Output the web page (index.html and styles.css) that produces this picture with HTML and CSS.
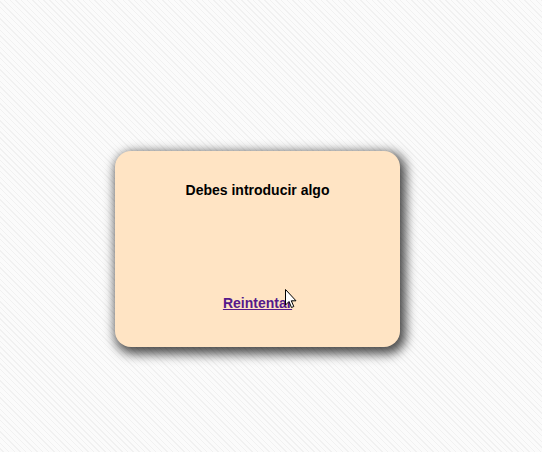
FILE: index.html
```html
<!DOCTYPE html>
<html lang="es">
<head>
<meta charset="utf-8">
<title>Aviso</title>
<link rel="stylesheet" href="styles.css">
</head>
<body>
<div class="stage">
  <div class="dialog">
    <p class="message">Debes introducir algo</p>
    <a class="retry" href="#">Reintentar</a>
  </div>
</div>
<svg class="cursor" width="13" height="20" viewBox="0 0 13 20">
  <path d="M0.5 0.5 L0.5 16 L4 12.5 L6.5 18.5 L8.8 17.5 L6.3 11.8 L11 11.8 Z" fill="#fff" stroke="#000" stroke-width="1"/>
</svg>
</body>
</html>
```
FILE: styles.css
```css
html, body {
  margin: 0;
  padding: 0;
  height: 100%;
}
body {
  background-color: #fafafa;
  background-image: repeating-linear-gradient(45deg, #fbfbfb 0px, #fbfbfb 2px, #f1f1f1 2px, #f1f1f1 3px, #fbfbfb 3px, #fbfbfb 4px);
  font-family: "Liberation Sans", Arial, sans-serif;
  position: relative;
}
.stage {
  padding: 151px 0 0 115px;
}
.dialog {
  width: 285px;
  height: 196px;
  box-sizing: border-box;
  background: #ffe4c4;
  border-radius: 16px;
  box-shadow: 3px 4px 11px 3px rgba(0, 0, 0, 0.7);
  display: flex;
  flex-direction: column;
  align-items: center;
  justify-content: space-between;
  padding: 31px 0 36px;
}
.message {
  margin: 0;
  font-size: 14px;
  font-weight: bold;
  line-height: 16px;
  color: #000;
}
.retry {
  font-size: 14px;
  font-weight: bold;
  line-height: 16px;
  color: #551a8b;
}
.cursor {
  position: absolute;
  left: 285px;
  top: 289px;
}
```
